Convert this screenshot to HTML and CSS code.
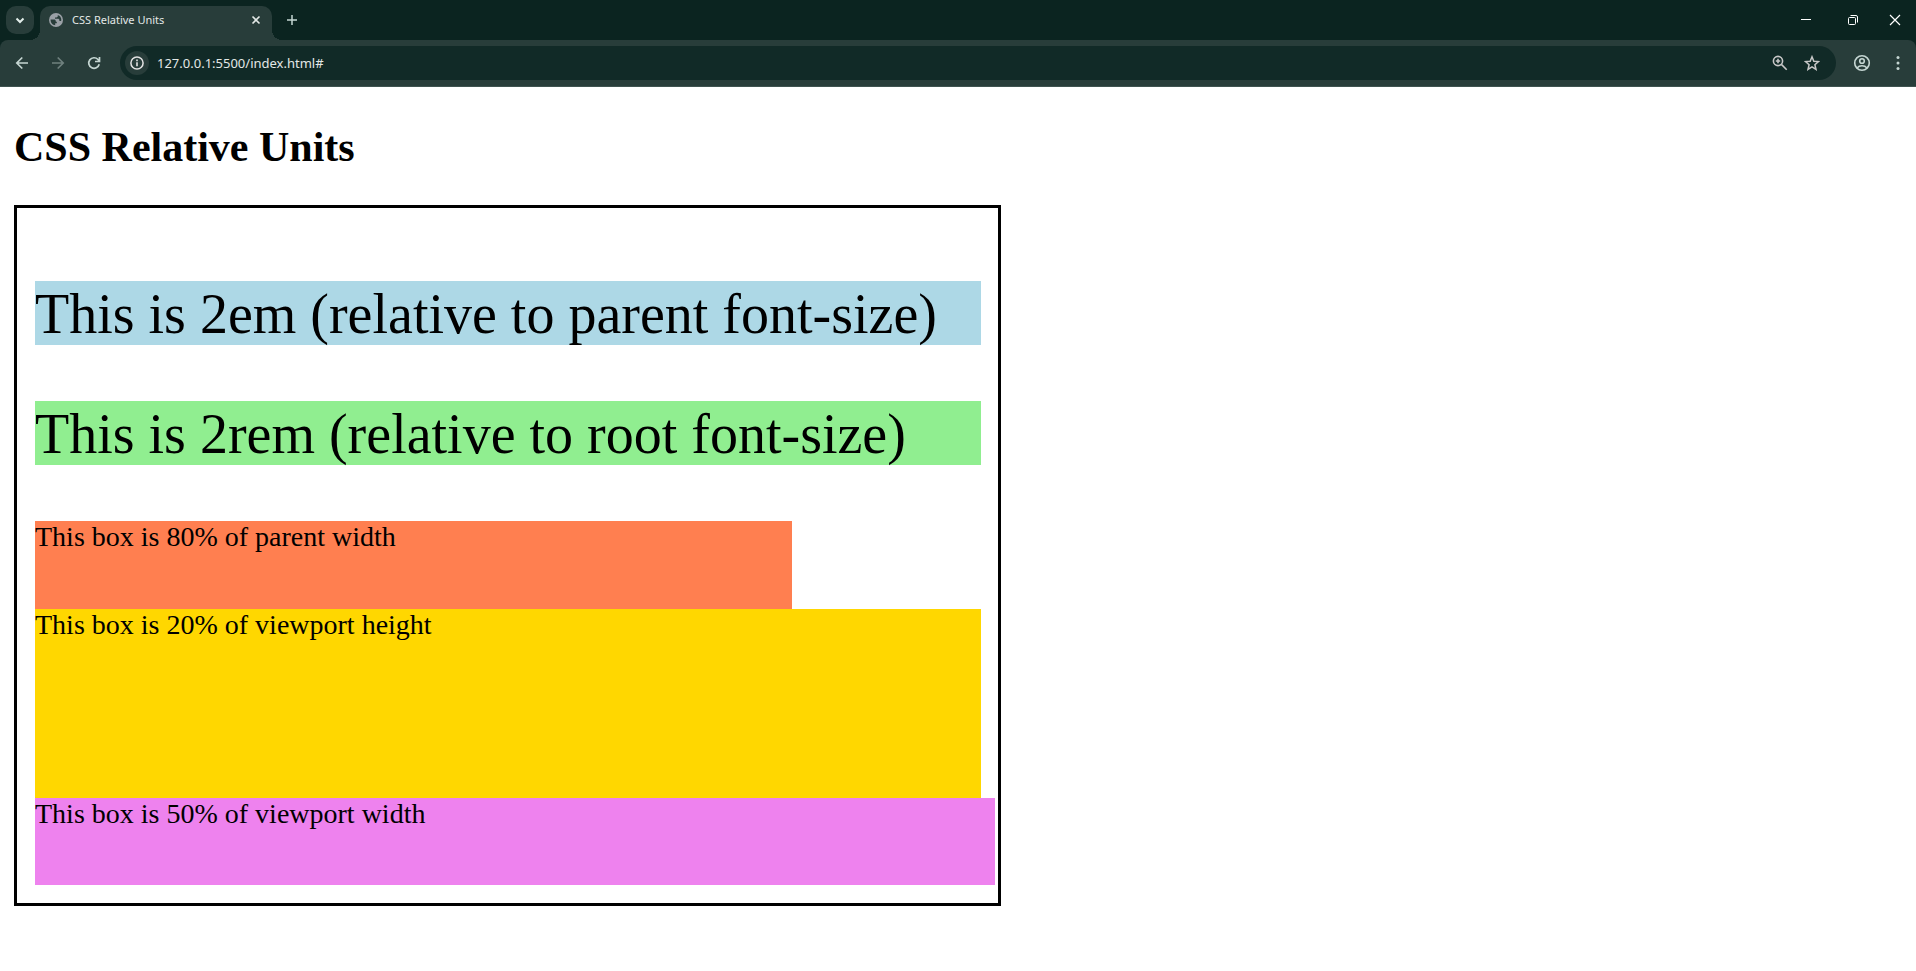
FILE: index.html
```html
<!DOCTYPE html>
<html lang="en">
<head>
  <meta charset="UTF-8">
  <meta name="viewport" content="width=device-width, initial-scale=1.0">
  <title>CSS Relative Units</title>
  <link rel="stylesheet" href="styles.css">
</head>
<body>
  <header class="browser">
    <div class="tab-strip">
      <button type="button" class="tab-search" aria-label="Search tabs">
        <svg width="16" height="16" viewBox="0 0 16 16"><path d="M4.500 6.500 8 10l3.500-3.500" fill="none" stroke="currentColor" stroke-width="2"/></svg>
      </button>
      <div class="tab">
        <svg class="favicon" width="14" height="14" viewBox="0 0 14 14">
          <circle cx="7" cy="7" r="7" fill="#9aa0a6"/>
          <path d="M1.600 6.500H5c1 0 1.800.7 1.800 1.700v.6h1v1.400H6.200v2.100C3.500 12 1.500 9.700 1.600 6.500zM8.800 1.900v1.200c0 .8-.6 1.400-1.400 1.400H6v1.300h3c.8 0 1.400.6 1.400 1.400v.9h1.700c.8-2.800-.7-5.300-3.300-6.200z" fill="#283d3a"/>
        </svg>
        <span class="tab-title">CSS Relative Units</span>
        <button type="button" class="tab-close" aria-label="Close tab">
          <svg width="16" height="16" viewBox="0 0 16 16"><path d="m4.500 4.500 7 7m0-7-7 7" stroke="currentColor" stroke-width="1.600"/></svg>
        </button>
      </div>
      <button type="button" class="new-tab" aria-label="New tab">
        <svg width="16" height="16" viewBox="0 0 16 16"><path d="M8 3v10M3 8h10" stroke="currentColor" stroke-width="1.500"/></svg>
      </button>
      <div class="window-controls">
        <button type="button" aria-label="Minimize">
          <svg width="12" height="12" viewBox="0 0 12 12"><path d="M1 5.500h10" stroke="currentColor"/></svg>
        </button>
        <button type="button" aria-label="Restore">
          <svg width="12" height="12" viewBox="0 0 12 12" fill="none" stroke="currentColor"><rect x="1.500" y="3.500" width="7" height="7" rx="1"/><path d="M3.500 1.500H9a1.500 1.500 0 0 1 1.500 1.500v5.500"/></svg>
        </button>
        <button type="button" aria-label="Close">
          <svg width="12" height="12" viewBox="0 0 12 12"><path d="m1 1 10 10M11 1 1 11" stroke="currentColor" stroke-width="1.200"/></svg>
        </button>
      </div>
    </div>

    <div class="toolbar">
      <button type="button" class="nav-btn" aria-label="Back">
        <svg width="16" height="16" viewBox="0 0 16 16"><path d="M14 8H3m5.300-5.500L2.800 8l5.500 5.500" fill="none" stroke="currentColor" stroke-width="1.700"/></svg>
      </button>
      <button type="button" class="nav-btn forward" aria-label="Forward">
        <svg width="16" height="16" viewBox="0 0 16 16"><path d="M2 8h11M7.700 2.500 13.200 8l-5.500 5.500" fill="none" stroke="currentColor" stroke-width="1.700"/></svg>
      </button>
      <button type="button" class="nav-btn" aria-label="Reload">
        <svg width="16" height="16" viewBox="0 0 16 16"><path d="M13.200 9.300A5.300 5.300 0 1 1 12 4.500l1 1.200M13.500 2v4.500H9" fill="none" stroke="currentColor" stroke-width="1.700"/></svg>
      </button>
      <div class="address-bar">
        <button type="button" class="site-info" aria-label="Site information">
          <svg width="14" height="14" viewBox="0 0 14 14"><circle cx="7" cy="7" r="6.100" fill="none" stroke="currentColor" stroke-width="1.500"/><path d="M7 6.200v4M7 3.600v1.600" stroke="currentColor" stroke-width="1.600"/></svg>
        </button>
        <input type="text" class="url" aria-label="Address" value="127.0.0.1:5500/index.html#">
        <button type="button" class="bar-btn" aria-label="Zoom">
          <svg width="16" height="16" viewBox="0 0 16 16" fill="none" stroke="currentColor" stroke-width="1.600"><circle cx="6" cy="6" r="4.600"/><path d="m9.400 9.400 5.300 5.300"/><path d="M6 3.800v4.400M3.800 6h4.400"/></svg>
        </button>
        <button type="button" class="bar-btn" aria-label="Bookmark">
          <svg width="16" height="16" viewBox="0 0 16 16"><path d="m8 1.800 1.800 4.400 4.700.4-3.600 3.100 1.100 4.600L8 11.800l-4 2.500 1.100-4.600-3.600-3.100 4.700-.4z" fill="none" stroke="currentColor" stroke-width="1.500"/></svg>
        </button>
      </div>
      <button type="button" class="profile" aria-label="Profile">
        <svg width="18" height="18" viewBox="0 0 18 18" fill="none" stroke="currentColor" stroke-width="1.600"><circle cx="9" cy="9" r="7.300"/><circle cx="9" cy="7" r="2.300"/><path d="M4 14c1.300-1.500 3-2.200 5-2.200s3.700.7 5 2.200"/></svg>
      </button>
      <button type="button" class="menu" aria-label="Menu">
        <svg width="16" height="16" viewBox="0 0 16 16" fill="currentColor"><circle cx="8" cy="2.500" r="1.500"/><circle cx="8" cy="8" r="1.500"/><circle cx="8" cy="13.500" r="1.500"/></svg>
      </button>
    </div>
  </header>

  <main class="page">
    <h1>CSS Relative Units</h1>
    <div class="container">
      <p class="em-text">This is 2em (relative to parent font-size)</p>
      <p class="rem-text">This is 2rem (relative to root font-size)</p>
      <div class="percent-box">This box is 80% of parent width</div>
      <div class="vh-box">This box is 20% of viewport height</div>
      <div class="vw-box">This box is 50% of viewport width</div>
    </div>
  </main>
</body>
</html>
```
FILE: styles.css
```css
* {
  box-sizing: border-box;
}
html {
  font-size: 28px;
}
body {
  margin: 0;
  background: white;
  color: black;
  font-family: "Liberation Serif", "Times New Roman", serif;
}
button {
  display: flex;
  align-items: center;
  justify-content: center;
  flex: none;
  padding: 0;
  border: none;
  background: none;
  color: inherit;
  cursor: pointer;
}

/* Browser window */
.browser {
  background: #0b2420;
  color: #c5d6d2;
  font-family: "Noto Sans", "Open Sans", sans-serif;
}
.tab-strip {
  display: flex;
  align-items: center;
  height: 40px;
  padding-left: 6px;
}
.tab-search {
  width: 28px;
  height: 28px;
  margin-right: 6px;
  border-radius: 10px;
  background: #283d3a;
  color: #e3eeeb;
}
.tab {
  position: relative;
  display: flex;
  align-items: center;
  align-self: flex-end;
  width: 232px;
  height: 34px;
  padding: 0 8px 6px 9px;
  border-radius: 10px 10px 0 0;
  background: #283d3a;
  color: #e3e8e6;
}
.tab::before,
.tab::after {
  content: "";
  position: absolute;
  bottom: 0;
  width: 10px;
  height: 10px;
}
.tab::before {
  right: 100%;
  background: radial-gradient(circle at 0 0, transparent 10px, #283d3a 10px);
}
.tab::after {
  left: 100%;
  background: radial-gradient(circle at 100% 0, transparent 10px, #283d3a 10px);
}
.favicon {
  flex: none;
}
.tab-title {
  flex: 1;
  margin-left: 9px;
  font-size: 11px;
  line-height: 16px;
}
.new-tab {
  width: 28px;
  height: 28px;
  margin-left: 6px;
}
.window-controls {
  display: flex;
  margin-left: auto;
  color: white;
}
.window-controls button {
  width: 46px;
  height: 40px;
}
.window-controls button:last-child {
  width: 40px;
  padding-right: 2px;
}
.window-controls button:nth-child(2) {
  width: 47px;
}
.toolbar {
  display: flex;
  align-items: center;
  height: 47px;
  padding-left: 4px;
  border-bottom: 1px solid #3f5350;
  border-radius: 8px 8px 0 0;
  background: #283d3a;
}
.nav-btn {
  width: 36px;
  height: 34px;
}
.forward {
  color: #6f817e;
}
.address-bar {
  display: flex;
  flex: 1;
  align-items: center;
  height: 34px;
  margin-left: 8px;
  padding: 0 8px 0 5px;
  border-radius: 17px;
  background: #112a27;
  color: #c7c7c7;
}
.site-info {
  width: 24px;
  height: 24px;
  border-radius: 50%;
  background: #283d3a;
  color: #e3e3e3;
}
.url {
  flex: 1;
  min-width: 0;
  margin-left: 8px;
  padding: 0;
  border: none;
  outline: none;
  background: none;
  color: #e3e8e6;
  font-family: inherit;
  font-size: 13px;
  line-height: 20px;
}
.bar-btn {
  width: 32px;
  height: 32px;
}
.profile {
  width: 36px;
  height: 34px;
  margin-left: 8px;
}
.menu {
  width: 36px;
  height: 34px;
}

/* Page content */
.page {
  padding: 0 14px;
}
h1 {
  margin: 0;
  padding: 35px 0 33px;
  font-size: 42px;
  line-height: 50px;
}
.container {
  width: calc(50vw + 29px);
  padding: 17px 17px 18px 18px;
  border: 3px solid black;
}
.em-text,
.rem-text {
  height: 64px;
  margin: 56px 0;
  line-height: 66px;
  white-space: nowrap;
}
.em-text {
  font-size: 2em;
  background: lightblue;
}
.rem-text {
  font-size: 2rem;
  background: lightgreen;
}
.percent-box {
  width: 80%;
  height: 88px;
  background: coral;
}
.vh-box {
  height: 189px;
  background: gold;
}
.vw-box {
  height: 87px;
  margin-right: -14px;
  background: violet;
}
```
